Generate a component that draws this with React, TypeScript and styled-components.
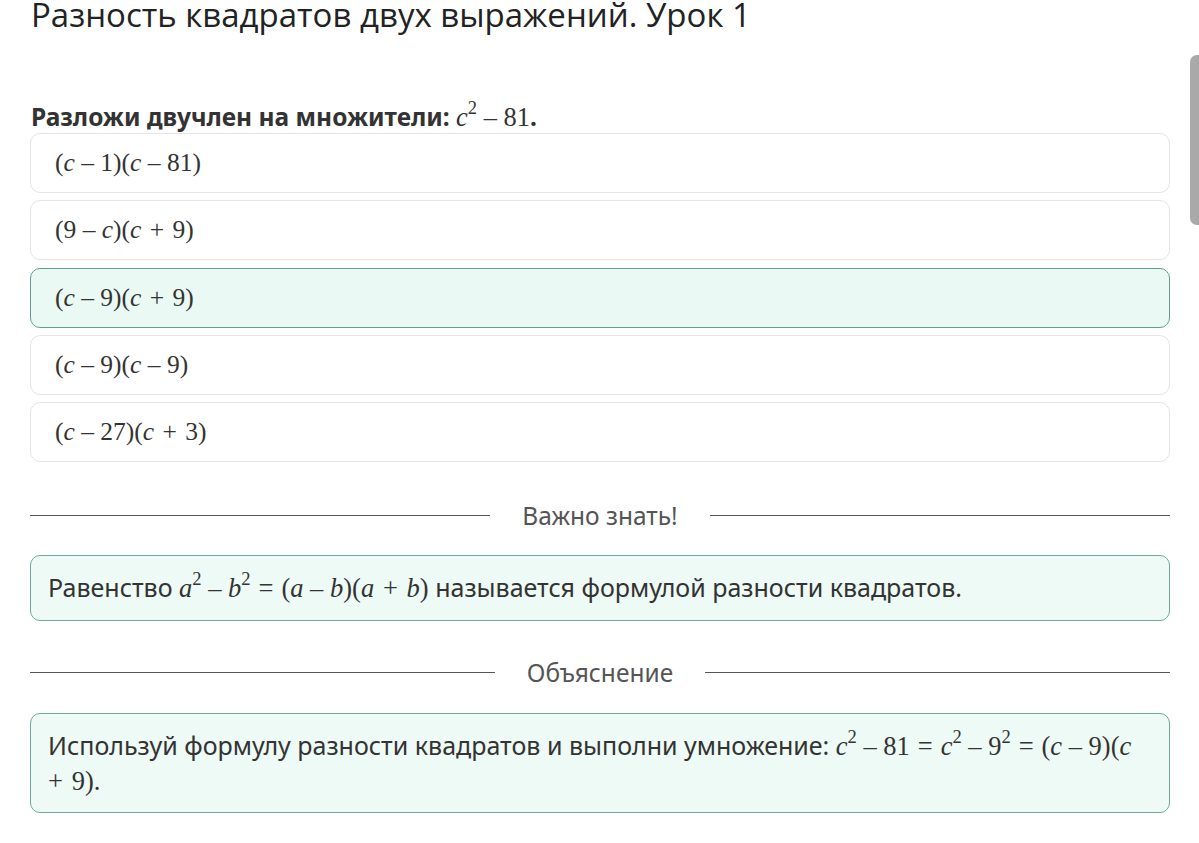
import React from "react";
import styled, { createGlobalStyle } from "styled-components";

const Global = createGlobalStyle`
  html, body { margin: 0; padding: 0; background: #ffffff; }
  body { font-family: "Noto Sans", "Open Sans", sans-serif; color: #333; }
`;

const Page = styled.div`
  position: relative;
  width: 1199px;
  height: 843px;
  overflow: hidden;
  box-sizing: border-box;
  padding: 0 29px 0 30px;
`;

const Title = styled.h1`
  margin: 0 0 0 1px;
  font-family: "Open Sans", "Noto Sans", sans-serif;
  font-weight: 400;
  font-size: 33px;
  line-height: 30px;
  color: #222;
  white-space: nowrap;
`;

const Question = styled.div`
  margin: 72px 0 1px;
  font-weight: 700;
  font-size: 24.5px;
  line-height: 30px;
  color: #333;
  padding-left: 1px;
`;

const Options = styled.div`
  display: flex;
  flex-direction: column;
  gap: 7.25px;
`;

const Option = styled.div<{ $selected?: boolean }>`
  box-sizing: border-box;
  height: 60px;
  display: flex;
  align-items: center;
  padding: 0 24px;
  border-radius: 10px;
  border: 1px solid ${(p) => (p.$selected ? "#5f9f93" : "#e4e4e4")};
  background: ${(p) => (p.$selected ? "#eaf9f4" : "#ffffff")};
  font-size: 25.5px;
  color: #333;
`;

const M = styled.span<{ $size?: string }>`
  font-family: "Liberation Serif", "DejaVu Serif", serif;
  font-weight: 400;
  font-size: ${(p) => p.$size ?? "1em"};
  white-space: nowrap;
`;

const V = styled.i`
  font-style: italic;
`;

const Op = styled.span<{ $pad: number; $lead?: boolean }>`
  padding: 0 ${(p) => p.$pad}em 0 ${(p) => (p.$lead ? 0 : p.$pad)}em;
`;

const Sup = styled.sup`
  font-size: 0.7em;
  vertical-align: 0.65em;
  line-height: 0;
`;

const Divider = styled.div<{ $top: number }>`
  display: flex;
  align-items: center;
  gap: 32px;
  margin-top: ${(p) => p.$top}px;
  height: 30px;
  font-size: 24.5px;
  color: #555;
  &::before,
  &::after {
    content: "";
    flex: 1;
    height: 1px;
    background: #555;
  }
`;

const InfoBox = styled.div<{ $top: number; $bottom: number }>`
  box-sizing: border-box;
  margin-top: ${(p) => p.$top}px;
  padding: 14px 17px ${(p) => p.$bottom}px;
  border-radius: 10px;
  border: 1px solid #6aaa9e;
  background: #edfaf5;
  font-size: 25px;
  line-height: 34px;
  color: #333;
`;

const ScrollTab = styled.div`
  position: absolute;
  right: 0;
  top: 55px;
  width: 9px;
  height: 170px;
  background: #a9a9a9;
  border-radius: 7px 0 0 7px;
`;

const minus = <Op $pad={0.25}>–</Op>;
const plus = <Op $pad={0.33}>+</Op>;
const eq = <Op $pad={0.3}>=</Op>;

export default function App() {
  return (
    <Page>
      <Global />
      <Title>Разность квадратов двух выражений. Урок 1</Title>
      <Question>
        Разложи двучлен на множители:{" "}
        <M $size="1.08em">
          <V>c</V>
          <Sup>2</Sup>
          {minus}81
        </M>
        .
      </Question>
      <Options>
        <Option>
          <M>
            (<V>c</V>
            {minus}1)(<V>c</V>
            {minus}81)
          </M>
        </Option>
        <Option>
          <M>
            (9{minus}
            <V>c</V>)(<V>c</V>
            {plus}9)
          </M>
        </Option>
        <Option $selected>
          <M>
            (<V>c</V>
            {minus}9)(<V>c</V>
            {plus}9)
          </M>
        </Option>
        <Option>
          <M>
            (<V>c</V>
            {minus}9)(<V>c</V>
            {minus}9)
          </M>
        </Option>
        <Option>
          <M>
            (<V>c</V>
            {minus}27)(<V>c</V>
            {plus}3)
          </M>
        </Option>
      </Options>

      <Divider $top={38}>Важно знать!</Divider>
      <InfoBox $top={25} $bottom={15}>
        Равенство{" "}
        <M $size="1.06em">
          <V>a</V>
          <Sup>2</Sup>
          {minus}
          <V>b</V>
          <Sup>2</Sup>
          {eq}(<V>a</V>
          {minus}
          <V>b</V>)(<V>a</V>
          {plus}
          <V>b</V>)
        </M>{" "}
        называется формулой разности квадратов.
      </InfoBox>

      <Divider $top={36}>Объяснение</Divider>
      <InfoBox $top={26} $bottom={14}>
        Используй формулу разности квадратов и выполни умножение:{" "}
        <M $size="1.06em">
          <V>c</V>
          <Sup>2</Sup>
          {minus}
        </M>
        <wbr />
        <M $size="1.06em">81{eq}</M>
        <wbr />
        <M $size="1.06em">
          <V>c</V>
          <Sup>2</Sup>
          {minus}
        </M>
        <wbr />
        <M $size="1.06em">
          9<Sup>2</Sup>
          {eq}
        </M>
        <wbr />
        <M $size="1.06em">
          (<V>c</V>
          {minus}
        </M>
        <wbr />
        <M $size="1.06em">
          9)(<V>c</V>
        </M>
        <wbr />
        <M $size="1.06em">
          <Op $pad={0.33} $lead>
            +
          </Op>
          9).
        </M>
      </InfoBox>
      <ScrollTab />
    </Page>
  );
}
